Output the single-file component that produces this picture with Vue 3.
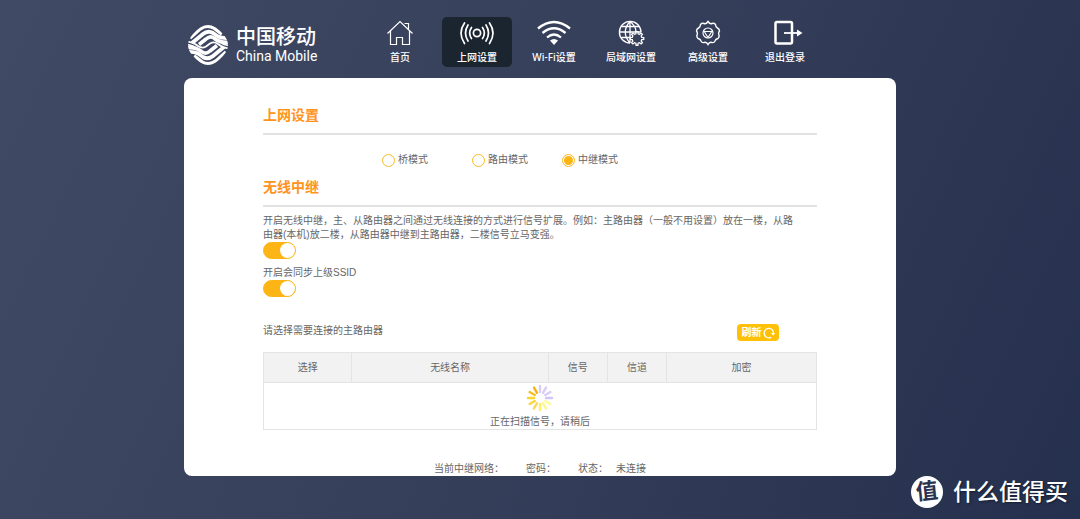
<script setup>
import { ref } from 'vue'

const menu = [
  { id: 'home', label: '首页' },
  { id: 'net', label: '上网设置' },
  { id: 'wifi', label: 'Wi-Fi设置' },
  { id: 'lan', label: '局域网设置' },
  { id: 'adv', label: '高级设置' },
  { id: 'exit', label: '退出登录' },
]
const active = ref('net')

const modes = [
  { id: 'bridge', label: '桥模式' },
  { id: 'route', label: '路由模式' },
  { id: 'relay', label: '中继模式' },
]
const mode = ref('relay')
const relayOn = ref(true)
const syncOn = ref(true)

const columns = ['选择', '无线名称', '信号', '信道', '加密']

const spokes = [
  '#d9ccf6', '#d9ccf6', '#d9ccf6', '#d3c4f3', '#fdfb9a', '#fdf98c',
  '#fdf06a', '#fbd85a', '#fad63a', '#fbd62c', '#f6c022', '#f5b31a',
]

const gear = (cx, cy, outer, inner, teeth) => {
  const points = []
  const step = (Math.PI * 2) / teeth
  for (let i = 0; i < teeth; i++) {
    for (const [r, o] of [[inner, -0.3], [outer, -0.17], [outer, 0.17], [inner, 0.3]]) {
      const a = i * step + o * step - Math.PI / 2
      points.push(`${(cx + r * Math.cos(a)).toFixed(2)},${(cy + r * Math.sin(a)).toFixed(2)}`)
    }
  }
  return points.join(' ')
}
</script>

<template>
  <div class="page">
    <header class="header">
      <a class="brand" href="#">
        <svg class="brand-mark" viewBox="0 0 40 40" aria-hidden="true">
          <defs>
            <clipPath id="brand-clip">
              <path d="M20 0C25 0 29 3 33 7C37 11 40 15 40 20C40 25 37 29 33 33C29 37 25 40 20 40C15 40 11 37 7 33C3 29 0 25 0 20C0 15 3 11 7 7C11 3 15 0 20 0Z" />
            </clipPath>
          </defs>
          <g clip-path="url(#brand-clip)" fill="none" stroke="#fff">
            <path stroke-width="3.600" d="M2 13L12 4Q19 -1 26 3L34 9" />
            <path stroke-width="3.800" d="M4 18L15 9Q20 5 25 8L30 11.500Q34 13.500 41 13" />
            <path stroke-width="3.600" d="M11 19.500L18 14Q22.500 10 26.500 13.500Q32 18 41 17.300" />
            <path stroke-width="1.800" d="M-1 16.500Q6 17.500 10 21Q14 24 18 21.500L22 18.500Q26 16 30 19Q34 22.500 41 23.500" />
            <path stroke-width="1.600" d="M-1 19.500Q5 20 9 23.500" />
            <path stroke-width="1.600" d="M41 20.500Q35 20 31 16.500" />
            <path stroke-width="3.600" d="M29 20.500L22 26Q17.500 30 13.500 26.500Q8 22 -1 22.700" />
            <path stroke-width="3.800" d="M36 22L25 31Q20 35 15 32L10 28.500Q6 26.500 -1 27" />
            <path stroke-width="3.600" d="M38 27L28 36Q21 41 14 37L6 31" />
          </g>
        </svg>
        <span class="brand-name">
          <span class="brand-cn">中国移动</span>
          <span class="brand-en">China Mobile</span>
        </span>
      </a>

      <nav class="nav">
        <a
          v-for="item in menu"
          :key="item.id"
          href="#"
          class="nav-item"
          :class="{ active: active === item.id }"
          @click.prevent="active = item.id"
        >
          <svg class="nav-icon" viewBox="0 0 36 26" fill="none" stroke="#fff" aria-hidden="true">
            <g v-if="item.id === 'home'" stroke-width="1.2">
              <path d="M5.500 13.500L18 1.500L30.500 13.500M8.500 11V24.500H14.500V17.500H20.500V24.500H27.500V11M22.500 3.500H26.500V9" />
            </g>
            <g v-else-if="item.id === 'net'" stroke-width="1.7" stroke-linecap="round">
              <circle cx="18" cy="13" r="3.600" />
              <path d="M12.500 7.500Q8.800 13 12.500 18.500M23.500 7.500Q27.200 13 23.500 18.500" />
              <path d="M9 5Q4 13 9 21M27 5Q32 13 27 21" />
              <path d="M5.500 3Q-1.500 13 5.500 23.500M30.500 3Q37.500 13 30.500 23.500" />
            </g>
            <g v-else-if="item.id === 'wifi'" stroke-width="2.300">
              <path d="M2 8.500Q18 -4.500 34 8.500" />
              <path d="M6.500 13Q18 3.500 29.500 13" />
              <path d="M11 17.500Q18 11.500 25 17.500" />
              <path d="M14 20.500Q18 17.500 22 20.500L18 25Z" fill="#fff" stroke="none" />
            </g>
            <g v-else-if="item.id === 'lan'" stroke-width="1.300">
              <path d="M17 23A10.800 10.800 0 1 1 28 12" />
              <path d="M17 1.500V23M6.500 12H28M8.500 6.500H26M8.500 17.500H18M17 1.500Q7.500 12 17 23M17 1.500Q23 6 23 12" />
              <polygon :points="gear(24, 18.500, 6.800, 4.900, 8)" fill="#37405b" />
            </g>
            <g v-else-if="item.id === 'adv'" stroke-width="1.400">
              <path d="M18 1.500Q20 4.500 22 3.500Q24 2.800 25.500 4.500Q25.500 7 27.500 8Q29.500 9 29.500 11Q28 13 29 15Q29.500 17 28 18.500Q25.500 19 25 21Q24 23 22 22.500Q19.500 21.500 18 24.500Q16.500 21.500 14 22.500Q12 23 11 21Q10.500 19 8 18.500Q6.500 17 7 15Q8 13 6.500 11Q6.500 9 8.500 8Q10.500 7 10.500 4.500Q12 2.800 14 3.500Q16 4.500 18 1.500Z" />
              <circle cx="18" cy="13" r="5" stroke-width="1.200" />
              <path d="M13.500 11.500H22.500M14.500 12L18 17.500L21.500 12" stroke-width="1.200" />
            </g>
            <g v-else stroke-width="2.500">
              <rect x="8.500" y="2" width="16.500" height="21.500" rx="1.500" />
              <path d="M17 13H32" stroke-width="1.800" />
              <path d="M30 9.500L35.500 13L30 16.500Z" fill="#fff" stroke="none" />
            </g>
          </svg>
          <span>{{ item.label }}</span>
        </a>
      </nav>
    </header>

    <main class="panel">
      <h2 class="title">上网设置</h2>
      <div class="modes" role="radiogroup" aria-label="上网设置">
        <label v-for="m in modes" :key="m.id" class="mode">
          <input v-model="mode" type="radio" name="mode" :value="m.id" />
          <span>{{ m.label }}</span>
        </label>
      </div>

      <h2 class="title">无线中继</h2>
      <div class="option">
        <label class="desc" for="relay-switch">开启无线中继，主、从路由器之间通过无线连接的方式进行信号扩展。例如：主路由器（一般不用设置）放在一楼，从路由器(本机)放二楼，从路由器中继到主路由器，二楼信号立马变强。</label>
        <input id="relay-switch" v-model="relayOn" class="switch" type="checkbox" />
      </div>
      <div class="option">
        <label class="desc" for="sync-switch">开启会同步上级SSID</label>
        <input id="sync-switch" v-model="syncOn" class="switch" type="checkbox" />
      </div>

      <div class="list-head">
        <span>请选择需要连接的主路由器</span>
        <button class="refresh" type="button">
          刷新
          <svg viewBox="0 0 12 12" fill="none" stroke="#fff" aria-hidden="true">
            <path d="M8 10.300A4.700 4.700 0 1 1 10.500 6.500" stroke-width="1.300" />
            <path d="M8 6H12L10.300 8.800Z" fill="#fff" stroke="none" />
          </svg>
        </button>
      </div>

      <table class="list">
        <colgroup>
          <col class="c-pick" />
          <col class="c-name" />
          <col class="c-signal" />
          <col class="c-signal" />
          <col />
        </colgroup>
        <thead>
          <tr>
            <th v-for="c in columns" :key="c" scope="col">{{ c }}</th>
          </tr>
        </thead>
        <tbody>
          <tr>
            <td colspan="5">
              <svg class="spinner" viewBox="0 0 28 28" aria-hidden="true">
                <line
                  v-for="(color, i) in spokes"
                  :key="i"
                  x1="14" y1="2" x2="14" y2="8"
                  :stroke="color"
                  stroke-width="2.400"
                  stroke-linecap="round"
                  :transform="`rotate(${i * 30} 14 14)`"
                />
              </svg>
              <div>正在扫描信号，请稍后</div>
            </td>
          </tr>
        </tbody>
      </table>

      <div class="status">
        <span>当前中继网络：</span>
        <span>密码：</span>
        <span class="state"><span>状态：</span><span>未连接</span></span>
      </div>
    </main>

    <div class="watermark">
      <span class="seal"><span>值</span></span>
      <span>什么值得买</span>
    </div>
  </div>
</template>

<style>
body {
  margin: 0;
}
</style>

<style scoped>
.page {
  position: relative;
  box-sizing: border-box;
  min-height: 100vh;
  padding: 0 184px 40px;
  background: linear-gradient(115deg, #414a65 0%, #363f5a 50%, #25304e 100%);
  color: #666;
  font: 10px/14px "Liberation Sans", "Noto Sans CJK SC", sans-serif;
}

.header {
  display: flex;
  justify-content: space-between;
  padding: 17px 76px 11px 4px;
}

.brand {
  display: flex;
  align-items: center;
  gap: 8px;
  padding-top: 6px;
  color: #fff;
  text-decoration: none;
  white-space: nowrap;
}

.brand-mark {
  width: 40px;
  height: 40px;
}

.brand-name {
  display: flex;
  flex-direction: column;
}

.brand-cn {
  font-size: 20px;
  font-weight: 500;
  line-height: 22px;
}

.brand-en {
  font-family: Roboto, sans-serif;
  font-size: 14px;
  line-height: 16px;
}

.nav {
  display: flex;
  gap: 7px;
}

.nav-item {
  display: flex;
  flex-direction: column;
  align-items: center;
  gap: 4px;
  box-sizing: border-box;
  width: 70px;
  height: 50px;
  padding-top: 3px;
  border-radius: 5px;
  color: #fff;
  font-family: "Noto Sans", "Noto Sans CJK SC", sans-serif;
  font-weight: 500;
  text-decoration: none;
  white-space: nowrap;
}

.nav-item.active {
  background: #1b2530;
}

.nav-icon {
  width: 36px;
  height: 26px;
}

.panel {
  padding: 27px 79px 0;
  border-radius: 8px;
  background: #fff;
}

.title {
  margin: 0;
  padding-bottom: 8px;
  border-bottom: 2px solid #e2e2e2;
  color: #ff9320;
  font-size: 14px;
  font-weight: 700;
  line-height: 20px;
}

.modes {
  display: flex;
  padding: 17px 0 9px 119px;
}

.mode {
  display: flex;
  align-items: center;
  gap: 3px;
  width: 90px;
  height: 16px;
}

.mode input {
  appearance: none;
  box-sizing: border-box;
  width: 13px;
  height: 13px;
  margin: 0;
  border: 1px solid #fdbb1f;
  border-radius: 50%;
  background: #fff;
}

.mode input:checked {
  padding: 1px;
  background: #fdb515 content-box;
}

.option {
  display: flex;
  flex-direction: column;
  align-items: flex-start;
  padding-top: 7px;
}

.desc {
  padding-right: 16px;
}

.switch {
  appearance: none;
  display: flex;
  justify-content: flex-end;
  box-sizing: border-box;
  width: 33px;
  height: 17px;
  margin: 0;
  border: 1px solid #fdb515;
  border-radius: 9px;
  background: #fdb515;
}

.switch::before {
  content: "";
  width: 15px;
  height: 15px;
  border-radius: 50%;
  background: #fff;
}

.switch:not(:checked) {
  justify-content: flex-start;
  border-color: #ccc;
  background: #ccc;
}

.list-head {
  display: flex;
  align-items: flex-start;
  justify-content: space-between;
  padding: 27px 38px 11px 0;
}

.refresh {
  display: flex;
  align-items: center;
  justify-content: center;
  gap: 1px;
  width: 42px;
  height: 17px;
  padding: 0;
  border: 0;
  border-radius: 4px;
  background: #ffc107;
  color: #fff;
  font: inherit;
  font-weight: 700;
}

.refresh svg {
  width: 12px;
  height: 12px;
}

.list {
  width: 100%;
  border: 1px solid #e4e4e4;
  border-collapse: collapse;
  table-layout: fixed;
  text-align: center;
}

.c-pick {
  width: 16%;
}

.c-name {
  width: 35.5%;
}

.c-signal {
  width: 10.7%;
}

.list th {
  height: 28px;
  padding: 1px 0 0;
  border: 1px solid #e4e4e4;
  background: #f2f2f2;
  font-weight: 400;
}

.list td {
  padding: 1px 0 0;
}

.spinner {
  display: block;
  width: 28px;
  height: 28px;
  margin: 0 auto 3px;
}

.status {
  display: flex;
  justify-content: center;
  gap: 22px;
  padding-top: 32px;
}

.state {
  display: flex;
  gap: 8px;
}

.watermark {
  position: absolute;
  right: 12px;
  bottom: 10px;
  display: flex;
  align-items: center;
  gap: 10px;
  color: #fff;
  font-size: 23px;
  font-weight: 500;
  line-height: 34px;
  text-shadow: 1px 1px 2px #141b30;
}

.seal {
  width: 32px;
  height: 32px;
  border-radius: 50%;
  background: #fff;
  color: #29334f;
  font-size: 22px;
  font-weight: 700;
  line-height: 32px;
  text-align: center;
  text-shadow: none;
}

.seal span {
  display: block;
  transform: rotate(-6deg);
}
</style>
